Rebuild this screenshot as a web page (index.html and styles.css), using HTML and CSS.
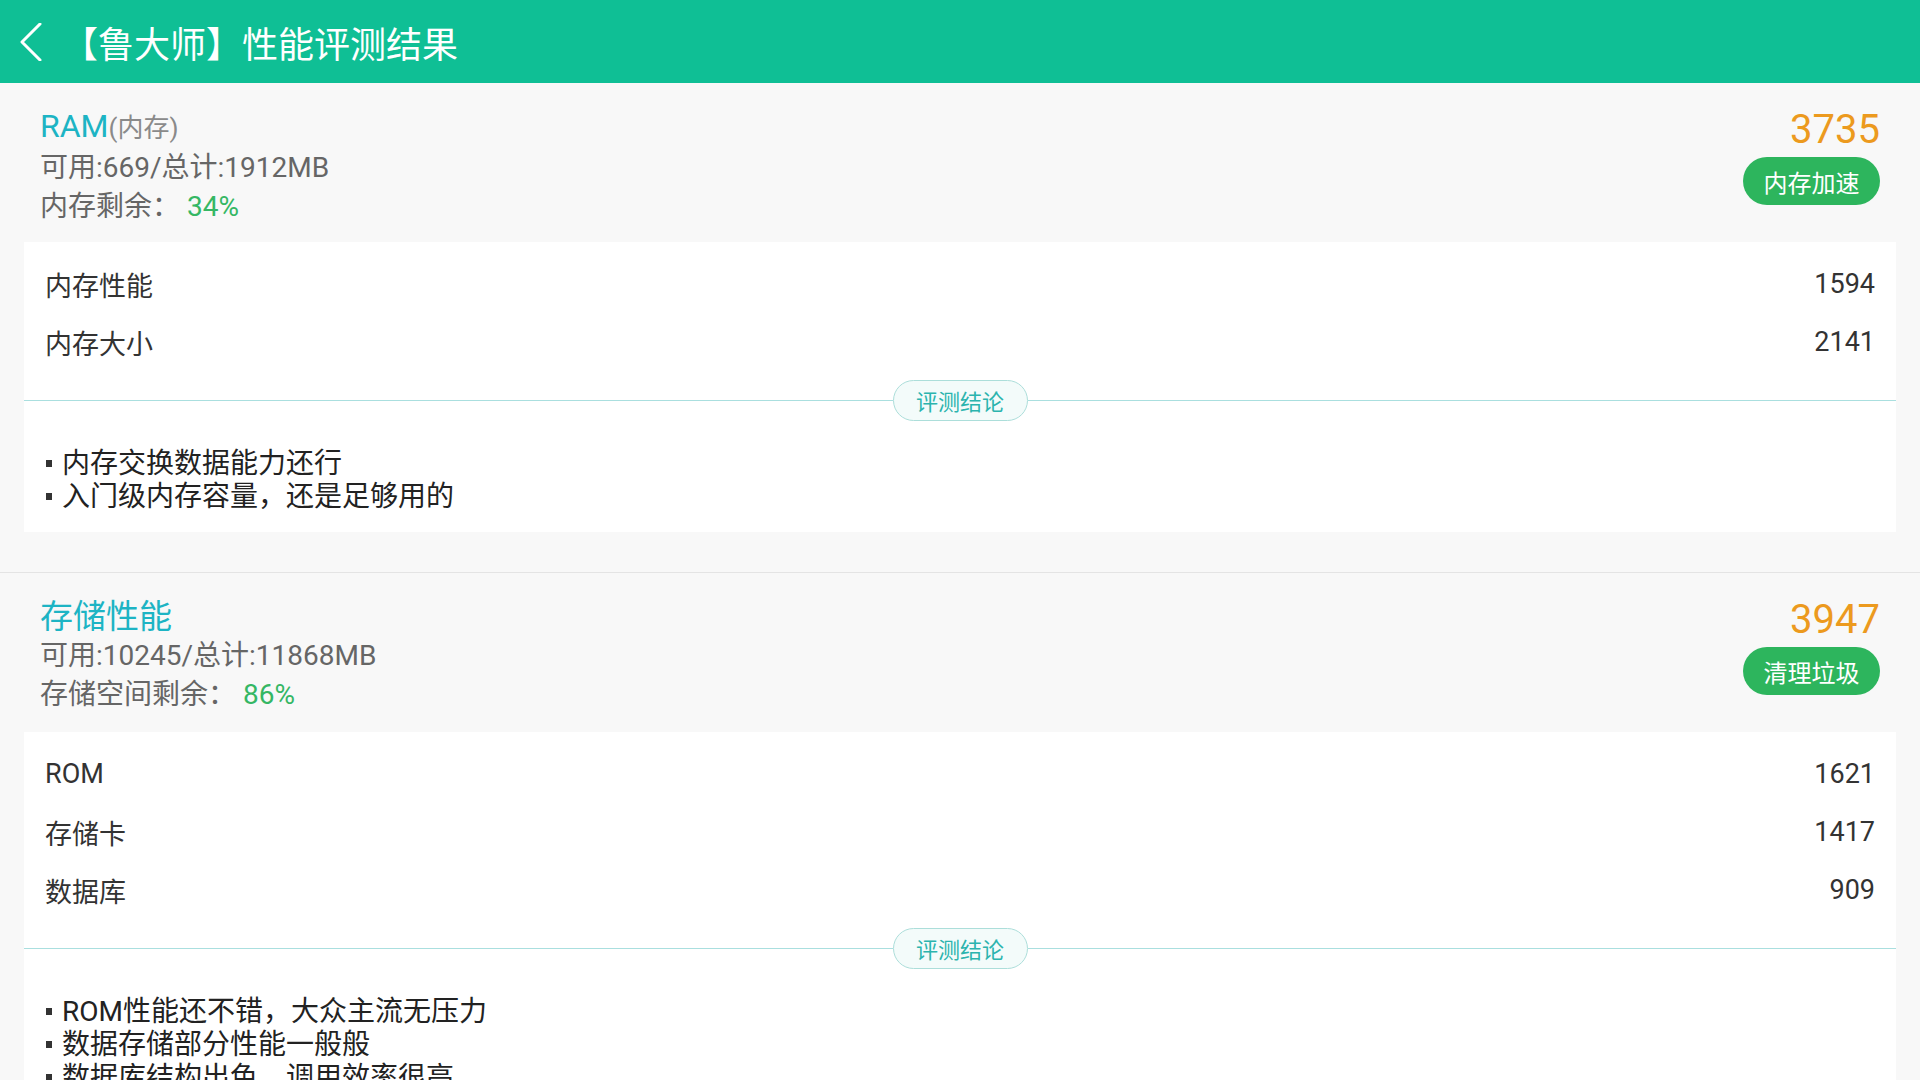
FILE: index.html
```html
<!DOCTYPE html>
<html lang="zh-CN">
<head>
    <meta charset="UTF-8">
    <meta name="viewport" content="width=device-width, initial-scale=1.0">
    <title>【鲁大师】性能评测结果</title>
    <link rel="stylesheet" href="styles.css">
</head>
<body>
    <!-- Верхняя панель -->
    <header class="topbar">
        <svg class="back" viewBox="0 0 22 38" width="22" height="38">
            <polyline points="20,1 2,19 20,37" fill="none" stroke="#fff" stroke-width="3" stroke-linecap="round" stroke-linejoin="round"/>
        </svg>
        <h1 class="title">【鲁大师】性能评测结果</h1>
    </header>

    <!-- Память -->
    <section class="section">
        <div class="summary">
            <div class="summary-info">
                <div class="summary-title">RAM<span class="sub">(内存)</span></div>
                <div class="summary-line">可用:669/总计:1912MB</div>
                <div class="summary-line">内存剩余： <span class="percent">34%</span></div>
            </div>
            <div class="summary-side">
                <div class="score">3735</div>
                <button class="action">内存加速</button>
            </div>
        </div>
        <div class="card">
            <div class="row"><span>内存性能</span><span>1594</span></div>
            <div class="row"><span>内存大小</span><span>2141</span></div>
            <div class="divider"><span class="pill">评测结论</span></div>
            <ul class="notes">
                <li>内存交换数据能力还行</li>
                <li>入门级内存容量，还是足够用的</li>
            </ul>
        </div>
    </section>

    <!-- Хранилище -->
    <section class="section">
        <div class="summary">
            <div class="summary-info">
                <div class="summary-title cn">存储性能</div>
                <div class="summary-line">可用:10245/总计:11868MB</div>
                <div class="summary-line">存储空间剩余： <span class="percent">86%</span></div>
            </div>
            <div class="summary-side">
                <div class="score">3947</div>
                <button class="action">清理垃圾</button>
            </div>
        </div>
        <div class="card">
            <div class="row"><span>ROM</span><span>1621</span></div>
            <div class="row"><span>存储卡</span><span>1417</span></div>
            <div class="row"><span>数据库</span><span>909</span></div>
            <div class="divider"><span class="pill">评测结论</span></div>
            <ul class="notes">
                <li>ROM性能还不错，大众主流无压力</li>
                <li>数据存储部分性能一般般</li>
                <li>数据库结构出色，调用效率很高</li>
            </ul>
        </div>
    </section>
</body>
</html>
```

FILE: styles.css
```css
* {
    box-sizing: border-box;
    margin: 0;
    padding: 0;
}

body {
    font-family: Roboto, "Noto Sans CJK SC", sans-serif;
    background: #f8f8f8;
    color: #333;
}

/* Верхняя панель */
.topbar {
    height: 83px;
    background: #0fbf95;
    display: flex;
    align-items: center;
    padding-left: 20px;
}

.back {
    display: block;
}

.title {
    font-family: "Noto Sans CJK SC", sans-serif;
    font-size: 36px;
    font-weight: 400;
    color: #fff;
    margin-left: 20px;
}

/* Секция */
.section {
    padding-bottom: 40px;
    border-bottom: 1px solid #e4e4e4;
}

.summary {
    height: 159px;
    display: flex;
    justify-content: space-between;
    padding: 24px 40px 0 40px;
}

.summary-title {
    font-size: 32px;
    line-height: 39px;
    color: #1db4c4;
}

.summary-title.cn {
    font-size: 33px;
}

.sub {
    font-size: 26px;
    color: #8a8a8a;
}

.summary-line {
    font-size: 28px;
    line-height: 39px;
    color: #666;
}

.percent {
    color: #35b764;
}

.summary-side {
    display: flex;
    flex-direction: column;
    align-items: flex-end;
}

.score {
    font-size: 40px;
    line-height: 46px;
    color: #ec9a1e;
}

.action {
    margin-top: 4px;
    width: 137px;
    height: 48px;
    border: none;
    border-radius: 24px;
    background: #2db55d;
    color: #fff;
    font-family: "Noto Sans CJK SC", sans-serif;
    font-size: 24px;
}

/* Карточка */
.card {
    margin: 0 24px;
    background: #fff;
    padding: 13px 0 19px;
}

.row {
    height: 58px;
    padding: 0 21px;
    display: flex;
    justify-content: space-between;
    align-items: center;
    font-size: 27px;
    color: #333;
}

.divider {
    height: 58px;
    display: flex;
    align-items: center;
}

.divider::before,
.divider::after {
    content: "";
    flex: 1;
    height: 1px;
    background: #aadfdf;
}

.pill {
    width: 135px;
    height: 41px;
    border: 1px solid #acdeda;
    border-radius: 21px;
    background: #f3fbfa;
    color: #2bb4ae;
    font-family: "Noto Sans CJK SC", sans-serif;
    font-size: 22px;
    display: flex;
    align-items: center;
    justify-content: center;
}

.notes {
    list-style: none;
    padding: 18px 21px 0;
}

.notes li {
    font-size: 28px;
    line-height: 33px;
    color: #222;
    display: flex;
    align-items: center;
}

.notes li::before {
    content: "";
    width: 6px;
    height: 7px;
    background: #333;
    margin: 0 10px 0 1px;
}
```
